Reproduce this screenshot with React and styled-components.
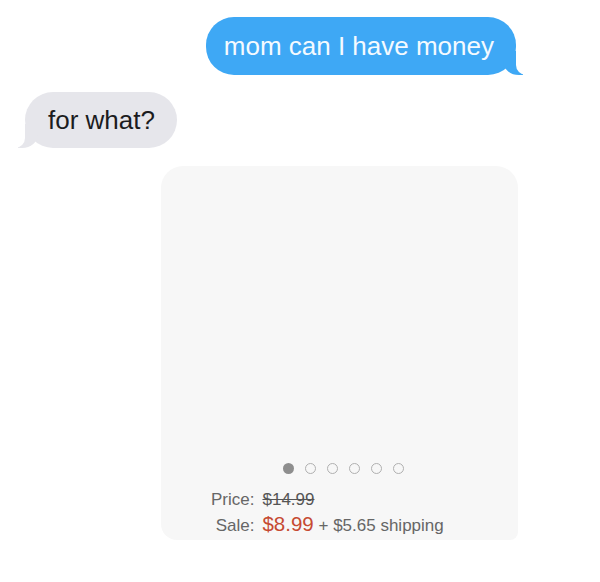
import React from "react";
import styled, { createGlobalStyle } from "styled-components";

const GlobalStyle = createGlobalStyle`
    html, body {
        margin: 0;
        padding: 0;
        background: #ffffff;
    }
    body {
        font-family: "Liberation Sans", Arial, sans-serif;
    }
`;

const Thread = styled.div`
    width: 600px;
    height: 582px;
    box-sizing: border-box;
    padding-top: 17px;
    display: flex;
    flex-direction: column;
    overflow: hidden;
`;

const Row = styled.div`
    display: flex;
    justify-content: ${(p) => (p.$mine ? "flex-end" : "flex-start")};
    padding: ${(p) => (p.$mine ? "0 84px 0 0" : "0 0 0 25px")};
    margin-top: ${(p) => p.$gap || 0}px;
`;

const Bubble = styled.div`
    position: relative;
    font-size: 26px;
    line-height: 30px;
    padding: ${(p) => (p.$mine ? "14px 22px 14px 18px" : "13px 22px 13px 23px")};
    border-radius: 28px;
    background: ${(p) => (p.$mine ? "#3ea8f5" : "#e6e6eb")};
    color: ${(p) => (p.$mine ? "#f4faff" : "#1c1c1e")};
    white-space: nowrap;

    &::before,
    &::after {
        content: "";
        position: absolute;
        bottom: 0;
        height: 24px;
    }

    &::before {
        width: 20px;
        background: ${(p) => (p.$mine ? "#3ea8f5" : "#e6e6eb")};
        ${(p) =>
            p.$mine
                ? "right: -7px; border-bottom-left-radius: 16px 14px;"
                : "left: -7px; border-bottom-right-radius: 16px 14px;"}
    }

    &::after {
        width: 26px;
        background: #ffffff;
        ${(p) =>
            p.$mine
                ? "right: -26px; border-bottom-left-radius: 10px;"
                : "left: -26px; border-bottom-right-radius: 10px;"}
    }
`;

const Card = styled.div`
    margin: 18px 0 0 161px;
    width: 357px;
    height: 374px;
    box-sizing: border-box;
    background: #f7f7f7;
    border-radius: 22px 22px 8px 16px;
    display: flex;
    flex-direction: column;
    justify-content: flex-end;
    padding: 0 0 1px 0;
`;

const Dots = styled.div`
    display: flex;
    justify-content: center;
    gap: 11px;
    padding-left: 8px;
    margin-bottom: 16px;
`;

const Dot = styled.span`
    width: 11px;
    height: 11px;
    box-sizing: border-box;
    border-radius: 50%;
    background: ${(p) => (p.$active ? "#8e8e8e" : "transparent")};
    border: ${(p) => (p.$active ? "none" : "1.5px solid #b0b0b0")};
`;

const Prices = styled.div`
    display: grid;
    grid-template-columns: auto 1fr;
    column-gap: 8px;
    align-items: baseline;
    padding-left: 50px;
    color: #666666;
    font-size: 17px;
`;

const Label = styled.span`
    justify-self: end;
    line-height: ${(p) => p.$lh}px;
`;

const Value = styled.span`
    line-height: ${(p) => p.$lh}px;
    white-space: nowrap;
`;

const OldPrice = styled.span`
    color: #555555;
    text-decoration: line-through;
`;

const SalePrice = styled.span`
    color: #c64a32;
    font-size: 20.5px;
`;

const pages = [true, false, false, false, false, false];

export default function App() {
    return (
        <>
            <GlobalStyle />
            <Thread>
                <Row $mine>
                    <Bubble $mine>mom can I have money</Bubble>
                </Row>
                <Row $gap={17}>
                    <Bubble>for what?</Bubble>
                </Row>
                <Card>
                    <Dots>
                        {pages.map((active, i) => (
                            <Dot key={i} $active={active} />
                        ))}
                    </Dots>
                    <Prices>
                        <Label $lh={20}>Price:</Label>
                        <Value $lh={20}>
                            <OldPrice>$14.99</OldPrice>
                        </Value>
                        <Label $lh={27}>Sale:</Label>
                        <Value $lh={27}>
                            <SalePrice>$8.99</SalePrice> + $5.65 shipping
                        </Value>
                    </Prices>
                </Card>
            </Thread>
        </>
    );
}
